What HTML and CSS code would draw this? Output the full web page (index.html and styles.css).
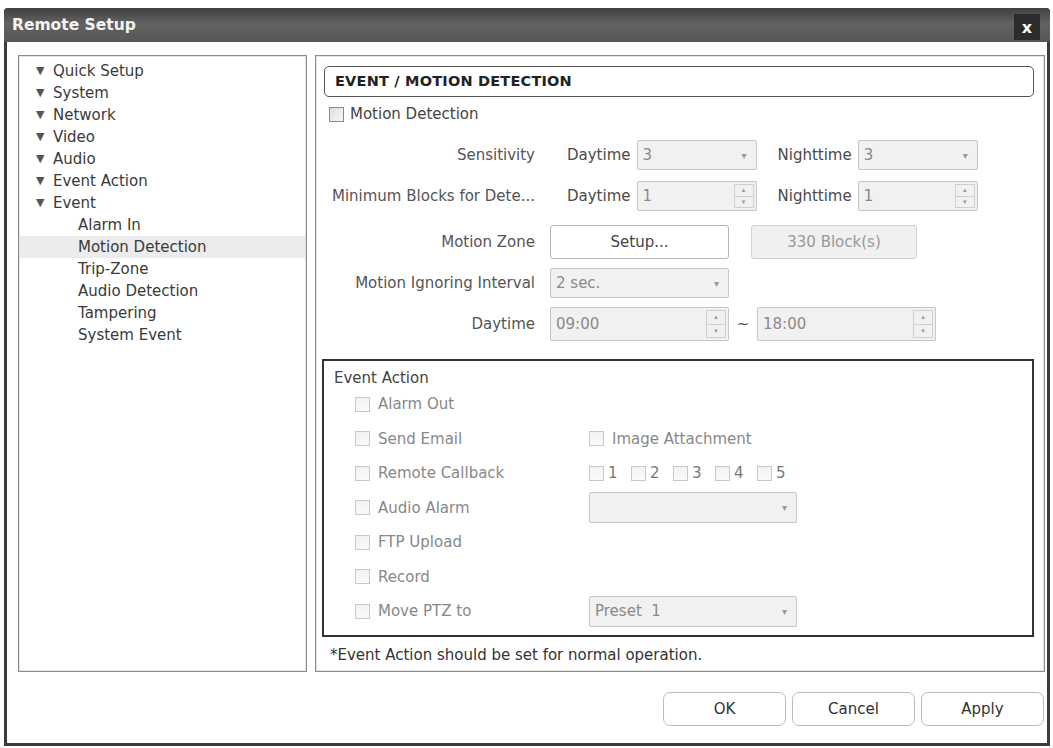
FILE: index.html
```html
<!DOCTYPE html>
<html lang="en">
<head>
    <meta charset="UTF-8">
    <title>Remote Setup</title>
    <link rel="stylesheet" href="styles.css">
</head>
<body>
    <div id="setupWindow">
        <div class="titleBar">
            <span class="title">Remote Setup</span>
            <span class="closeBtn">x</span>
        </div>

        <div class="windowBody">
            <div class="panels">
                <ul class="tree">
                    <li class="node"><span class="arrow">&#9660;</span>Quick Setup</li>
                    <li class="node"><span class="arrow">&#9660;</span>System</li>
                    <li class="node"><span class="arrow">&#9660;</span>Network</li>
                    <li class="node"><span class="arrow">&#9660;</span>Video</li>
                    <li class="node"><span class="arrow">&#9660;</span>Audio</li>
                    <li class="node"><span class="arrow">&#9660;</span>Event Action</li>
                    <li class="node"><span class="arrow">&#9660;</span>Event</li>
                    <li class="leaf">Alarm In</li>
                    <li class="leaf selected">Motion Detection</li>
                    <li class="leaf">Trip-Zone</li>
                    <li class="leaf">Audio Detection</li>
                    <li class="leaf">Tampering</li>
                    <li class="leaf">System Event</li>
                </ul>

                <div class="content">
                    <div class="pageHeader">EVENT / MOTION DETECTION</div>

                    <label class="check enabled mainCheck"><span class="box"></span>Motion Detection</label>

                    <div class="row r1">
                        <span class="lbl">Sensitivity</span>
                        <span class="sub first">Daytime</span>
                        <div class="select w120"><span>3</span><i class="caret">&#9662;</i></div>
                        <span class="sub second">Nighttime</span>
                        <div class="select w120"><span>3</span><i class="caret">&#9662;</i></div>
                    </div>

                    <div class="row r2">
                        <span class="lbl">Minimum Blocks for Dete...</span>
                        <span class="sub first">Daytime</span>
                        <div class="spin w120"><span>1</span><i class="spinBtn"><b>&#9652;</b><b>&#9662;</b></i></div>
                        <span class="sub second">Nighttime</span>
                        <div class="spin w120"><span>1</span><i class="spinBtn"><b>&#9652;</b><b>&#9662;</b></i></div>
                    </div>

                    <div class="row tall r3">
                        <span class="lbl">Motion Zone</span>
                        <button class="btn setupBtn">Setup...</button>
                        <button class="btn blockBtn">330 Block(s)</button>
                    </div>

                    <div class="row r4">
                        <span class="lbl">Motion Ignoring Interval</span>
                        <div class="select w179"><span>2 sec.</span><i class="caret">&#9662;</i></div>
                    </div>

                    <div class="row tall r5">
                        <span class="lbl">Daytime</span>
                        <div class="spin w179"><span>09:00</span><i class="spinBtn"><b>&#9652;</b><b>&#9662;</b></i></div>
                        <span class="tilde">~</span>
                        <div class="spin w179"><span>18:00</span><i class="spinBtn"><b>&#9652;</b><b>&#9662;</b></i></div>
                    </div>

                    <div class="actionBox">
                        <div class="actionTitle">Event Action</div>
                        <div class="actionRow">
                            <label class="check"><span class="box"></span>Alarm Out</label>
                        </div>
                        <div class="actionRow">
                            <label class="check"><span class="box"></span>Send Email</label>
                            <label class="check col2"><span class="box"></span>Image Attachment</label>
                        </div>
                        <div class="actionRow">
                            <label class="check"><span class="box"></span>Remote Callback</label>
                            <div class="col2 numbers">
                                <label class="check num"><span class="box"></span>1</label>
                                <label class="check num"><span class="box"></span>2</label>
                                <label class="check num"><span class="box"></span>3</label>
                                <label class="check num"><span class="box"></span>4</label>
                                <label class="check num"><span class="box"></span>5</label>
                            </div>
                        </div>
                        <div class="actionRow">
                            <label class="check"><span class="box"></span>Audio Alarm</label>
                            <div class="select col2 w208"><span></span><i class="caret">&#9662;</i></div>
                        </div>
                        <div class="actionRow">
                            <label class="check"><span class="box"></span>FTP Upload</label>
                        </div>
                        <div class="actionRow">
                            <label class="check"><span class="box"></span>Record</label>
                        </div>
                        <div class="actionRow">
                            <label class="check"><span class="box"></span>Move PTZ to</label>
                            <div class="select col2 w208"><span>Preset&nbsp;&nbsp;1</span><i class="caret">&#9662;</i></div>
                        </div>
                    </div>

                    <p class="note">*Event Action should be set for normal operation.</p>
                </div>
            </div>

            <div class="footer">
                <button class="btn footBtn">OK</button>
                <button class="btn footBtn">Cancel</button>
                <button class="btn footBtn">Apply</button>
            </div>
        </div>
    </div>
</body>
</html>
```

FILE: styles.css
```css
body {
    margin: 0;
    background-color: #fff;
    font-family: 'DejaVu Sans', Verdana, sans-serif;
    font-size: 15px;
    color: #333;
}
#setupWindow {
    margin: 8px 0 0 4px;
    width: 1046px;
    height: 738px;
    box-sizing: border-box;
    border: 3px solid #3c3c3c;
    border-top: none;
    border-radius: 4px 4px 0 0;
    display: flex;
    flex-direction: column;
    background-color: #fff;
}
.titleBar {
    height: 34px;
    flex: none;
    margin: 0 -3px;
    border-radius: 4px 4px 0 0;
    background: linear-gradient(#404040, #626262 45%, #575757);
    display: flex;
    align-items: center;
    justify-content: space-between;
    padding: 0 10px 0 8px;
}
.title {
    color: #f4f4f4;
    font-weight: bold;
    font-size: 15.5px;
}
.closeBtn {
    width: 26px;
    height: 26px;
    margin-top: 4px;
    background-color: #2c2c2c;
    color: #fff;
    font-weight: bold;
    font-size: 16px;
    display: flex;
    align-items: center;
    justify-content: center;
}
.windowBody {
    flex: 1;
    display: flex;
    flex-direction: column;
    padding: 13px 2px 0 11px;
}
.panels {
    display: flex;
    gap: 8px;
    height: 617px;
}
.tree {
    list-style: none;
    margin: 0;
    padding: 4px 1px 0;
    width: 285px;
    border: 1px solid #8c8c8c;
    box-shadow: inset 0 0 0 1px #e2e2e2;
    color: #3a3a3a;
}
.tree li {
    height: 22px;
    line-height: 22px;
    white-space: nowrap;
}
.node {
    padding-left: 16px;
}
.arrow {
    display: inline-block;
    width: 17px;
    font-size: 11px;
    color: #555;
    vertical-align: top;
}
.leaf {
    padding-left: 58px;
}
.tree .selected {
    background-color: #ececec;
}
.content {
    flex: 1;
    border: 1px solid #8c8c8c;
    box-shadow: inset 0 0 0 1px #e2e2e2;
    padding: 10px 10px 0 8px;
    display: flex;
    flex-direction: column;
}
.pageHeader {
    height: 29px;
    border: 1px solid #555;
    border-radius: 5px;
    padding-left: 10px;
    line-height: 29px;
    font-weight: bold;
    font-size: 14.5px;
    letter-spacing: 0.2px;
    color: #222;
}
.check {
    display: flex;
    align-items: center;
    color: #888;
    white-space: nowrap;
}
.box {
    width: 13px;
    height: 13px;
    border: 1px solid #c8c8c8;
    background: linear-gradient(#f2f2f2, #fafafa);
    margin-right: 8px;
    flex: none;
}
.check.enabled {
    color: #444;
}
.check.enabled .box {
    border-color: #8a8a8a;
    background: linear-gradient(135deg, #ddd, #f8f8f8);
    margin-right: 6px;
}
.mainCheck {
    height: 20px;
    margin-top: 7px;
    padding-left: 5px;
}
.row {
    display: flex;
    align-items: center;
    height: 30px;
    color: #555;
}
.row.tall {
    height: 34px;
}
.r1 { margin-top: 16px; }
.r2 { margin-top: 11px; }
.r3 { margin-top: 14px; }
.r4 { margin-top: 9px; }
.r5 { margin-top: 9px; }
.lbl {
    width: 211px;
    flex: none;
    text-align: right;
    margin-right: 15px;
    white-space: nowrap;
}
.sub {
    color: #4a4a4a;
}
.sub.first {
    margin-left: 17px;
    margin-right: 6px;
}
.sub.second {
    margin-left: 21px;
    margin-right: 6px;
}
.select, .spin {
    height: 28px;
    border: 1px solid #c6c6c6;
    border-radius: 2px;
    background-color: #f1f1f1;
    display: flex;
    align-items: center;
    justify-content: space-between;
    color: #8a8a8a;
    box-sizing: content-box;
}
.row.tall .spin {
    height: 32px;
}
.select span, .spin span {
    padding-left: 5px;
}
.caret {
    font-style: normal;
    font-size: 10px;
    color: #999;
    margin-right: 9px;
}
.spinBtn {
    font-style: normal;
    align-self: stretch;
    width: 18px;
    margin: 2px;
    border: 1px solid #cfcfcf;
    display: flex;
    flex-direction: column;
    font-size: 7px;
    color: #999;
}
.spinBtn b {
    flex: 1;
    display: flex;
    align-items: center;
    justify-content: center;
    font-weight: normal;
}
.spinBtn b + b {
    border-top: 1px solid #cfcfcf;
}
.w120 { width: 118px; }
.w179 { width: 177px; }
.w208 { width: 206px; }
.btn {
    font-family: inherit;
    font-size: 15px;
    border: 1px solid #b5b5b5;
    border-radius: 3px;
    background-color: #fff;
    color: #444;
    height: 34px;
    padding: 0;
}
.setupBtn {
    width: 179px;
}
.blockBtn {
    width: 166px;
    margin-left: 22px;
    background-color: #f0f0f0;
    border-color: #d0d0d0;
    color: #999;
}
.tilde {
    width: 28px;
    text-align: center;
    color: #555;
}
.actionBox {
    margin: 18px 0 0 -2px;
    box-sizing: border-box;
    border: 2px solid #333;
    height: 278px;
    padding: 8px 0 0 10px;
}
.actionTitle {
    height: 18px;
    line-height: 18px;
    color: #444;
}
.actionRow {
    height: 34.5px;
    display: flex;
    align-items: center;
    padding-left: 21px;
}
.actionRow > .check:first-child {
    width: 234px;
}
.numbers {
    display: flex;
}
.check.num {
    width: 42px;
    color: #777;
}
.check.num .box {
    margin-right: 4px;
}
.actionRow .select {
    height: 29px;
}
.note {
    margin: 9px 0 0 6px;
    line-height: 18px;
    color: #333;
}
.footer {
    display: flex;
    justify-content: flex-end;
    gap: 6px;
    padding: 20px 1px 0 0;
}
.footBtn {
    width: 123px;
    height: 34px;
    border-radius: 7px;
    border-color: #bdbdbd;
    color: #333;
}
```
